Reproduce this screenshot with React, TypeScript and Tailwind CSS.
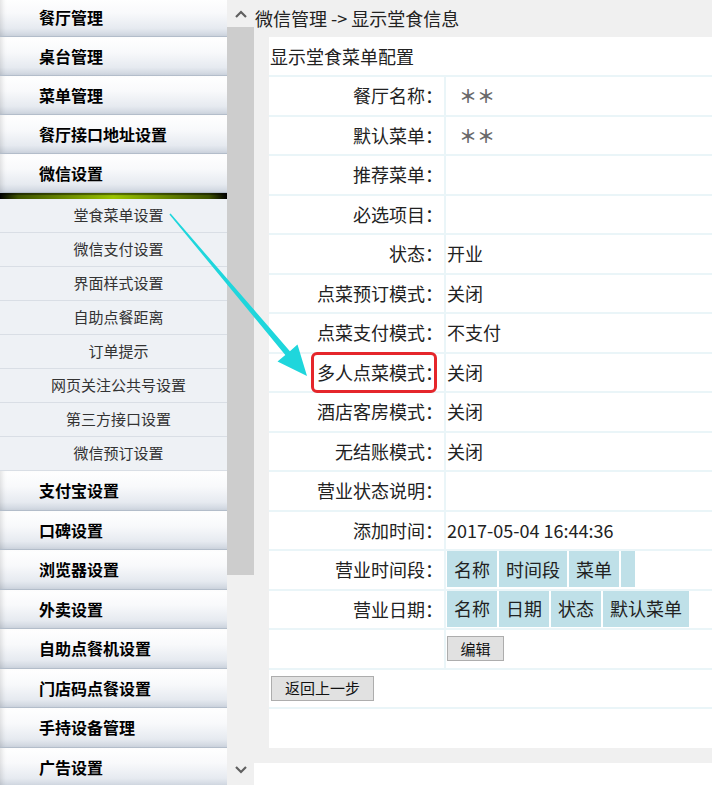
import React from 'react';

const topMenus = ['餐厅管理', '桌台管理', '菜单管理', '餐厅接口地址设置', '微信设置'];
const subMenus = ['堂食菜单设置', '微信支付设置', '界面样式设置', '自助点餐距离', '订单提示', '网页关注公共号设置', '第三方接口设置', '微信预订设置'];
const bottomMenus = ['支付宝设置', '口碑设置', '浏览器设置', '外卖设置', '自助点餐机设置', '门店码点餐设置', '手持设备管理', '广告设置'];

const rows: { label: string; value?: string; stars?: boolean }[] = [
    { label: '餐厅名称：', stars: true },
    { label: '默认菜单：', stars: true },
    { label: '推荐菜单：' },
    { label: '必选项目：' },
    { label: '状态：', value: '开业' },
    { label: '点菜预订模式：', value: '关闭' },
    { label: '点菜支付模式：', value: '不支付' },
    { label: '多人点菜模式：', value: '关闭' },
    { label: '酒店客房模式：', value: '关闭' },
    { label: '无结账模式：', value: '关闭' },
    { label: '营业状态说明：' },
    { label: '添加时间：', value: '2017-05-04 16:44:36' },
]

function MenuItem({ title, tall }: { title: string; tall?: boolean }) {
    return (
        <div className={`${tall ? 'h-[39.5px]' : 'h-[39px]'} shrink-0 flex items-center pl-[39px] text-[16px] font-bold text-black border-b border-[#b3bdca] bg-[linear-gradient(to_bottom,#ffffff_0%,#f8f9fb_40%,#e6eaf0_80%,#cdd4de_100%)] shadow-[inset_5px_0_5px_-3px_rgba(0,0,0,0.12)]`}>
            {title}
        </div>
    )
}

function Chip({ text }: { text?: string }) {
    return (
        <div className={`h-[36px] flex items-center bg-[#bfe0e8] ${text ? 'px-[7px]' : 'w-[14px]'}`}>
            {text}
        </div>
    )
}

const App: React.FC = () => {
    return (
        <div className="relative w-[712px] h-[785px] overflow-hidden flex bg-white font-['Noto_Sans_CJK_SC','Noto_Sans',sans-serif] text-[#222]">
            {/* sidebar */}
            <div className="w-[227px] shrink-0 flex flex-col">
                <div className="-mt-[2px] flex flex-col">
                    {topMenus.map(m => <MenuItem key={m} title={m} />)}
                </div>
                <div className="h-[6px] shrink-0 bg-[linear-gradient(to_right,#000_0%,#3d5200_8%,#9ac400_50%,#3d5200_92%,#000_100%)] shadow-[inset_0_2px_1px_rgba(0,0,0,0.45)]"></div>
                <div className="flex flex-col bg-[#eef1f5]">
                    {subMenus.map(s => (
                        <div key={s} className="h-[34px] shrink-0 flex items-center justify-center pl-[10px] text-[15px] text-[#333] border-b border-[#d9dee5]">
                            {s}
                        </div>
                    ))}
                </div>
                <div className="flex flex-col">
                    {bottomMenus.map(m => <MenuItem key={m} title={m} tall />)}
                </div>
            </div>

            {/* scrollbar */}
            <div className="w-[27px] shrink-0 flex flex-col bg-[#f0f0f0]">
                <div className="h-[27px] flex items-center justify-center">
                    <svg width="14" height="10" viewBox="0 0 14 10">
                        <path d="M2 8 L7 3 L12 8" fill="none" stroke="#606060" strokeWidth="2.2" />
                    </svg>
                </div>
                <div className="h-[548px] bg-[#cdcdcd]"></div>
                <div className="flex-1"></div>
                <div className="h-[30px] flex items-center justify-center">
                    <svg width="14" height="10" viewBox="0 0 14 10">
                        <path d="M2 2 L7 7 L12 2" fill="none" stroke="#606060" strokeWidth="2.2" />
                    </svg>
                </div>
            </div>

            {/* main */}
            <div className="flex-1 flex flex-col">
                <div className="h-[763px] flex flex-col bg-[#f0f0f0]">
                    <div className="h-[37px] flex items-center pl-[1px] text-[18px] text-[#222]">微信管理 -&gt; 显示堂食信息</div>
                    <div className="ml-[15px] h-[711px] bg-[#eaf5f8] flex flex-col gap-[2px] text-[18px]">
                        <div className="h-[38px] bg-white flex items-center pl-[1px]">显示堂食菜单配置</div>
                        {rows.map(r => (
                            <div key={r.label} className="h-[37.5px] flex gap-[2px]">
                                <div className="w-[175px] bg-white flex items-center justify-end pr-[1px]">{r.label}</div>
                                <div className="flex-1 bg-white flex items-center pl-[1px]">
                                    {r.stars ? <span className="pl-[12px] text-[#6a6a6a] font-bold">＊＊</span> : r.value}
                                </div>
                            </div>
                        ))}
                        <div className="h-[37.5px] flex gap-[2px]">
                            <div className="w-[175px] bg-white flex items-center justify-end pr-[1px]">营业时间段：</div>
                            <div className="flex-1 bg-white flex items-start pl-[1px]">
                                <div className="flex gap-[2px]">
                                    <Chip text="名称" />
                                    <Chip text="时间段" />
                                    <Chip text="菜单" />
                                    <Chip />
                                </div>
                            </div>
                        </div>
                        <div className="h-[37.5px] flex gap-[2px]">
                            <div className="w-[175px] bg-white flex items-center justify-end pr-[1px]">营业日期：</div>
                            <div className="flex-1 bg-white flex items-start pl-[1px]">
                                <div className="flex gap-[2px]">
                                    <Chip text="名称" />
                                    <Chip text="日期" />
                                    <Chip text="状态" />
                                    <Chip text="默认菜单" />
                                </div>
                            </div>
                        </div>
                        <div className="h-[37.5px] flex gap-[2px]">
                            <div className="w-[175px] bg-white"></div>
                            <div className="flex-1 bg-white flex items-center pl-[1px]">
                                <button className="w-[57px] h-[25px] bg-[#e1e1e1] border border-[#adadad] text-[15px] text-[#111] flex items-center justify-center">编辑</button>
                            </div>
                        </div>
                        <div className="h-[37.5px] bg-white flex items-center pl-[2px]">
                            <button className="w-[103px] h-[25px] bg-[#e1e1e1] border border-[#adadad] text-[15px] text-[#111] flex items-center justify-center">返回上一步</button>
                        </div>
                        <div className="flex-1 bg-white"></div>
                    </div>
                </div>
                <div className="flex-1 bg-white"></div>
            </div>

            {/* annotation overlays */}
            <svg className="absolute left-0 top-0 pointer-events-none" width="712" height="785" viewBox="0 0 712 785">
                <polygon
                    points="170.6,213.5 289.9,351.2 297.5,344.5 307,376 277.5,361.5 285.3,355.0 169.4,214.5"
                    fill="#1fd6dc"
                />
            </svg>
            <div className="absolute left-[311px] top-[352px] w-[126px] h-[41px] border-[3px] border-[#e5262b] rounded-[6px] pointer-events-none"></div>
        </div>
    );
};

export default App;
